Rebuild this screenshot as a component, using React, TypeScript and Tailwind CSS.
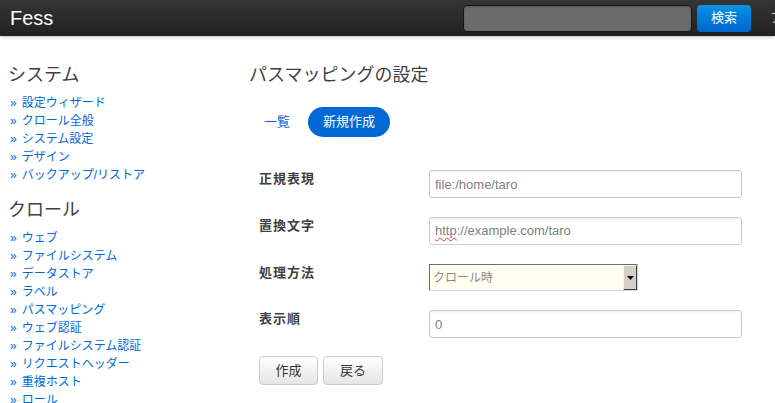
const systemLinks = ["設定ウィザード", "クロール全般", "システム設定", "デザイン", "バックアップ/リストア"];
const crawlLinks = [
  "ウェブ",
  "ファイルシステム",
  "データストア",
  "ラベル",
  "パスマッピング",
  "ウェブ認証",
  "ファイルシステム認証",
  "リクエストヘッダー",
  "重複ホスト",
  "ロール",
];

const NavGroup = ({ title, links, first }: { title: string; links: string[]; first?: boolean }) => (
  <div className={first ? "" : "mt-[13px]"}>
    <h3 className="text-[18px] leading-[27px] text-[#404040]">{title}</h3>
    <ul className={first ? "mt-[5px]" : "mt-[4.5px]"}>
      {links.map((l) => (
        <li key={l} className="text-[12px] leading-[18px] text-[#0069d6]">
          <a href="#" className="flex gap-[5px]">
            <span className="pl-[2px]">»</span>
            <span>{l}</span>
          </a>
        </li>
      ))}
    </ul>
  </div>
);

const Field = ({ label, children }: { label: string; children: React.ReactNode }) => (
  <div className="flex items-start mb-[19px]">
    <label className="w-[170px] shrink-0 text-[13px] leading-[17px] font-bold tracking-[1px] text-[#404040]">{label}</label>
    {children}
  </div>
);

const inputCls =
  "w-[313px] h-[28px] rounded-[3px] border border-[#ccc] bg-white px-[5px] text-[13px] text-[#808080] shadow-[inset_0_1px_2px_rgba(0,0,0,0.08)] outline-none";

export default function App() {
  return (
    <div className="w-full min-h-[403px] overflow-hidden bg-white font-['Liberation_Sans','Noto_Sans_CJK_JP',sans-serif]">
      <header className="h-9 flex items-center pl-[10px] bg-linear-to-b from-[#353535] to-[#212121] shadow-[0_1px_3px_rgba(0,0,0,0.25)]">
        <div className="flex-1 text-[20px] text-white leading-none">Fess</div>
        <div className="w-[312px] shrink-0 flex items-center whitespace-nowrap overflow-hidden">
          <div className="w-[229px] h-[27px] shrink-0 rounded-[4px] border border-[#151515] bg-[#6b6b6b] shadow-[inset_0_1px_2px_rgba(0,0,0,0.2)]" />
          <button className="ml-[5px] w-[54px] h-[27px] shrink-0 rounded-[4px] bg-linear-to-b from-[#0a94e4] to-[#0064cd] text-[13px] text-white">
            検索
          </button>
          <span className="ml-[19px] text-[13px] text-[#bfbfbf]">アカウント</span>
        </div>
      </header>

      <div className="flex">
        <aside className="w-[249px] shrink-0 pl-2 pt-[26px]">
          <NavGroup title="システム" links={systemLinks} first />
          <NavGroup title="クロール" links={crawlLinks} />
        </aside>

        <main className="flex-1 pt-[26px]">
          <h2 className="text-[18px] leading-[27px] text-[#404040]">パスマッピングの設定</h2>

          <nav className="mt-[18px] flex items-center gap-[3px] text-[13px]">
            <a href="#" className="h-[30px] flex items-center px-[15px] text-[#0069d6]">一覧</a>
            <a href="#" className="h-[30px] flex items-center px-[15px] rounded-full bg-[#0069d6] text-white">新規作成</a>
          </nav>

          <form className="mt-[33px] pl-[10px]">
            <Field label="正規表現">
              <input className={inputCls} defaultValue="file:/home/taro" />
            </Field>
            <Field label="置換文字">
              <div className={inputCls + " flex items-center"}>
                <span className="underline decoration-wavy decoration-[#e33] decoration-1 underline-offset-2">http</span>
                <span>://example.com/taro</span>
              </div>
            </Field>
            <Field label="処理方法">
              <div className="w-[209px] h-[27px] flex border border-t-[#6d6d6d] border-l-[#6d6d6d] border-r-[#d8d8d8] border-b-[#d8d8d8] bg-[#fffff0]">
                <span className="flex-1 flex items-center pl-[3px] text-[12px] text-[#8a8a8a]">クロール時</span>
                <span className="w-[14px] flex items-center justify-center bg-[#d4d0c8] border border-t-[#f4f4f4] border-l-[#f4f4f4] border-r-[#404040] border-b-[#404040]">
                  <svg width="7" height="4" viewBox="0 0 7 4">
                    <path d="M0 0h7L3.5 4z" fill="#000" />
                  </svg>
                </span>
              </div>
            </Field>
            <Field label="表示順">
              <input className={inputCls} defaultValue="0" />
            </Field>

            <div className="flex gap-[5px] -mt-[1px]">
              <button type="button" className="w-[59px] h-[29px] rounded-[4px] border border-[#ccc] bg-linear-to-b from-white to-[#e6e6e6] text-[13px] text-[#333]">
                作成
              </button>
              <button type="button" className="w-[60px] h-[29px] rounded-[4px] border border-[#ccc] bg-linear-to-b from-white to-[#e6e6e6] text-[13px] text-[#333]">
                戻る
              </button>
            </div>
          </form>
        </main>
      </div>
    </div>
  );
}
